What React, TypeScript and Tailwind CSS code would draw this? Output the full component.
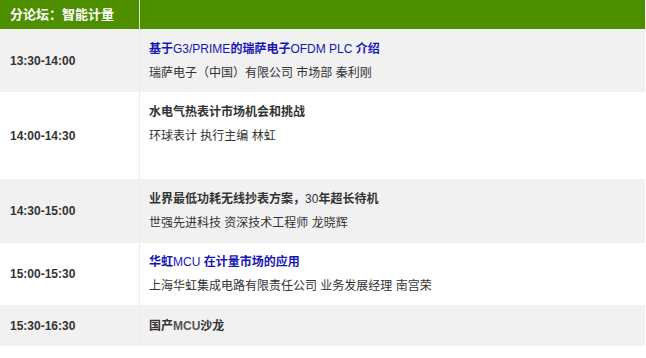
import React from "react";

const cjk = "font-['Liberation_Sans','Noto_Sans_CJK_SC',sans-serif]";

type Row = {
  time: string;
  h: string;
  bg: string;
  title: React.ReactNode;
  blue?: boolean;
  sub?: string;
  extra?: boolean;
};

const L = ({ children }: { children: React.ReactNode }) => (
  <span className="font-normal">{children}</span>
);

const rows: Row[] = [
  {
    time: "13:30-14:00",
    h: "h-[63px]",
    bg: "bg-[#f1f1f1]",
    blue: true,
    title: (
      <>
        基于<L>G3/PRIME</L>的瑞萨电子<L>OFDM PLC </L>介绍
      </>
    ),
    sub: "瑞萨电子（中国）有限公司 市场部 秦利刚",
  },
  {
    time: "14:00-14:30",
    h: "h-[87px]",
    bg: "bg-white",
    title: "水电气热表计市场机会和挑战",
    sub: "环球表计 执行主编 林虹",
    extra: true,
  },
  {
    time: "14:30-15:00",
    h: "h-[64px]",
    bg: "bg-[#f1f1f1]",
    title: (
      <>
        业界最低功耗无线抄表方案，<L>30</L>年超长待机
      </>
    ),
    sub: "世强先进科技 资深技术工程师 龙晓辉",
  },
  {
    time: "15:00-15:30",
    h: "h-[62px]",
    bg: "bg-white",
    blue: true,
    title: (
      <>
        华虹<L>MCU</L> 在计量市场的应用
      </>
    ),
    sub: "上海华虹集成电路有限责任公司 业务发展经理 南宫荣",
  },
  {
    time: "15:30-16:30",
    h: "h-[41px]",
    bg: "bg-[#f1f1f1]",
    title: (
      <>
        国产<span className="text-[#555]">MCU</span>沙龙
      </>
    ),
  },
];

export default function App() {
  return (
    <div className={`w-[646px] h-[358px] bg-white ${cjk}`}>
      <div className="w-[645px] flex flex-col">
        <div className="h-[29px] flex bg-[#4e8f00]">
          <div className="w-[140px] border-r border-[#d8e6c8] flex items-center pl-[10px] text-[13px] font-bold text-white">
            分论坛：智能计量
          </div>
          <div className="flex-1" />
        </div>
        {rows.map((r, i) => (
          <div key={i} className={`flex ${r.h} ${r.bg}`}>
            <div className="w-[140px] shrink-0 border-r border-[#ececec] flex items-center pl-[10px] text-[12px] font-bold text-[#333] font-['Liberation_Sans',sans-serif]">
              {r.time}
            </div>
            <div className="flex-1 flex flex-col justify-center pl-[9px] text-[12px] leading-[24px]">
              <div
                className={`font-bold ${
                  r.blue ? "text-[#1616b4]" : "text-[#333]"
                }`}
              >
                {r.title}
              </div>
              {r.sub && <div className="text-[#333]">{r.sub}</div>}
              {r.extra && <div>&nbsp;</div>}
            </div>
          </div>
        ))}
      </div>
    </div>
  );
}
